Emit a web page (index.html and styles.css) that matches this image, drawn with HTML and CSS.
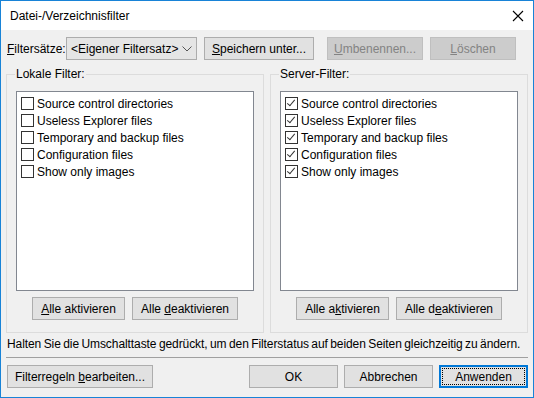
FILE: index.html
```html
<!DOCTYPE html>
<html lang="de">
<head>
  <meta charset="UTF-8">
  <title>Datei-/Verzeichnisfilter</title>
  <link rel="stylesheet" href="styles.css">
</head>
<body>

  <div class="window">

    <!-- TITLE BAR -->
    <div class="titlebar">
      <span class="title">Datei-/Verzeichnisfilter</span>
      <svg class="close" width="12" height="12" viewBox="0 0 12 12">
        <path d="M1 1 L11 11 M11 1 L1 11" stroke="#000" stroke-width="1.1" fill="none"/>
      </svg>
    </div>

    <div class="content">

      <!-- FILTER SETS -->
      <div class="setrow">
        <span class="setlabel"><u>F</u>iltersätze:</span>
        <div class="combo">
          <span>&lt;Eigener Filtersatz&gt;</span>
          <svg width="10" height="6" viewBox="0 0 10 6">
            <path d="M0.5 0.5 L5 5 L9.5 0.5" stroke="#555" fill="none"/>
          </svg>
        </div>
        <button class="btn save"><u>S</u>peichern unter...</button>
        <button class="btn rename" disabled><u>U</u>mbenennen...</button>
        <button class="btn delete" disabled><u>L</u>öschen</button>
      </div>

      <!-- GROUPS -->
      <div class="groups">

        <fieldset class="group">
          <legend>Lokale Filter:</legend>
          <div class="list">
            <label class="item"><span class="box"></span>Source control directories</label>
            <label class="item"><span class="box"></span>Useless Explorer files</label>
            <label class="item"><span class="box"></span>Temporary and backup files</label>
            <label class="item"><span class="box"></span>Configuration files</label>
            <label class="item"><span class="box"></span>Show only images</label>
          </div>
          <div class="groupbtns">
            <button class="btn on"><u>A</u>lle aktivieren</button>
            <button class="btn off">Alle <u>d</u>eaktivieren</button>
          </div>
        </fieldset>

        <fieldset class="group">
          <legend>Server-Filter:</legend>
          <div class="list">
            <label class="item"><span class="box checked"></span>Source control directories</label>
            <label class="item"><span class="box checked"></span>Useless Explorer files</label>
            <label class="item"><span class="box checked"></span>Temporary and backup files</label>
            <label class="item"><span class="box checked"></span>Configuration files</label>
            <label class="item"><span class="box checked"></span>Show only images</label>
          </div>
          <div class="groupbtns">
            <button class="btn on">Alle a<u>k</u>tivieren</button>
            <button class="btn off">Alle d<u>e</u>aktivieren</button>
          </div>
        </fieldset>

      </div>

      <p class="hint">Halten Sie die Umschalttaste gedrückt, um den Filterstatus auf beiden Seiten gleichzeitig zu ändern.</p>

      <hr class="sep">

      <!-- DIALOG BUTTONS -->
      <div class="bottom">
        <button class="btn edit">Filterregeln <u>b</u>earbeiten...</button>
        <div class="spacer"></div>
        <button class="btn dlg">OK</button>
        <button class="btn dlg">Abbrechen</button>
        <button class="btn dlg default"><span>Anwenden</span></button>
      </div>

    </div>
  </div>

</body>
</html>
```
FILE: styles.css
```css
body {
  margin: 0;
  font-family: "Liberation Sans", Arial, sans-serif;
  font-size: 12px;
  color: #000;
  background: #f0f0f0;
}

.window {
  width: 534px;
  height: 398px;
  box-sizing: border-box;
  border: 1px solid #1883d7;
  display: flex;
  flex-direction: column;
}

/* Title bar */
.titlebar {
  height: 29px;
  background: #fff;
  display: flex;
  align-items: center;
  padding: 0 8px 0 9px;
}

.title {
  flex: 1;
}

.close {
  margin-right: 1px;
}

.content {
  flex: 1;
  background: #f0f0f0;
  padding: 7px 5px 0 5px;
  display: flex;
  flex-direction: column;
}

u {
  text-decoration: underline;
  text-underline-offset: 1px;
}

/* Buttons */
.btn {
  font: inherit;
  color: #000;
  height: 23px;
  padding: 0;
  background: #e1e1e1;
  border: 1px solid #adadad;
  box-sizing: border-box;
}

.btn:disabled {
  background: #cccccc;
  border-color: #bfbfbf;
  color: #838383;
}

/* Filter set row */
.setrow {
  display: flex;
  align-items: center;
  height: 23px;
}

.setlabel {
  width: 59px;
  padding-left: 1px;
}

.combo {
  width: 131px;
  height: 23px;
  box-sizing: border-box;
  border: 1px solid #acacac;
  background: #e5e5e5;
  display: flex;
  align-items: center;
  justify-content: space-between;
  padding: 0 4px 0 4px;
}

.save {
  width: 110px;
  margin-left: 7px;
}

.rename {
  width: 96px;
  margin-left: 13px;
}

.delete {
  width: 86px;
  margin-left: 7px;
}

/* Group boxes */
.groups {
  display: flex;
  gap: 6px;
  margin-top: 7px;
}

.group {
  flex: 1;
  margin: 0;
  border: 1px solid #dcdcdc;
  padding: 9px 9px 12px 9px;
  min-width: 0;
}

legend {
  padding: 0 1px;
  margin-left: -1px;
  line-height: 15px;
}

.list {
  height: 200px;
  box-sizing: border-box;
  background: #fff;
  border: 1px solid #828790;
  padding: 3px 4px;
}

.item {
  display: flex;
  align-items: center;
  height: 17px;
  white-space: nowrap;
}

.box {
  width: 13px;
  height: 13px;
  box-sizing: border-box;
  border: 1px solid #333;
  background: #fff;
  margin-right: 3px;
  position: relative;
}

.box.checked::after {
  content: "";
  position: absolute;
  left: 3px;
  top: 0px;
  width: 3px;
  height: 7px;
  border-right: 1px solid #333;
  border-bottom: 1px solid #333;
  transform: rotate(40deg);
}

.groupbtns {
  display: flex;
  justify-content: center;
  gap: 7px;
  margin-top: 6px;
}

.on {
  width: 93px;
}

.off {
  width: 106px;
}

/* Hint + separator */
.hint {
  margin: 4px 0 0 1px;
  line-height: 15px;
  white-space: nowrap;
  letter-spacing: -0.08px;
  word-spacing: -0.8px;
}

.sep {
  margin: 5px 0 0 0;
  border: none;
  border-top: 1px solid #a0a0a0;
}

/* Bottom buttons */
.bottom {
  display: flex;
  margin-top: 7px;
  padding-left: 1px;
  gap: 6px;
}

.spacer {
  flex: 1;
}

.edit {
  width: 146px;
}

.dlg {
  width: 89px;
}

.default {
  border-color: #0078d7;
  box-shadow: inset 0 0 0 1px #0078d7;
  padding: 2px;
}

.default span {
  display: flex;
  align-items: center;
  justify-content: center;
  height: 100%;
  outline: 1px dotted #000;
  outline-offset: -1px;
}
```
